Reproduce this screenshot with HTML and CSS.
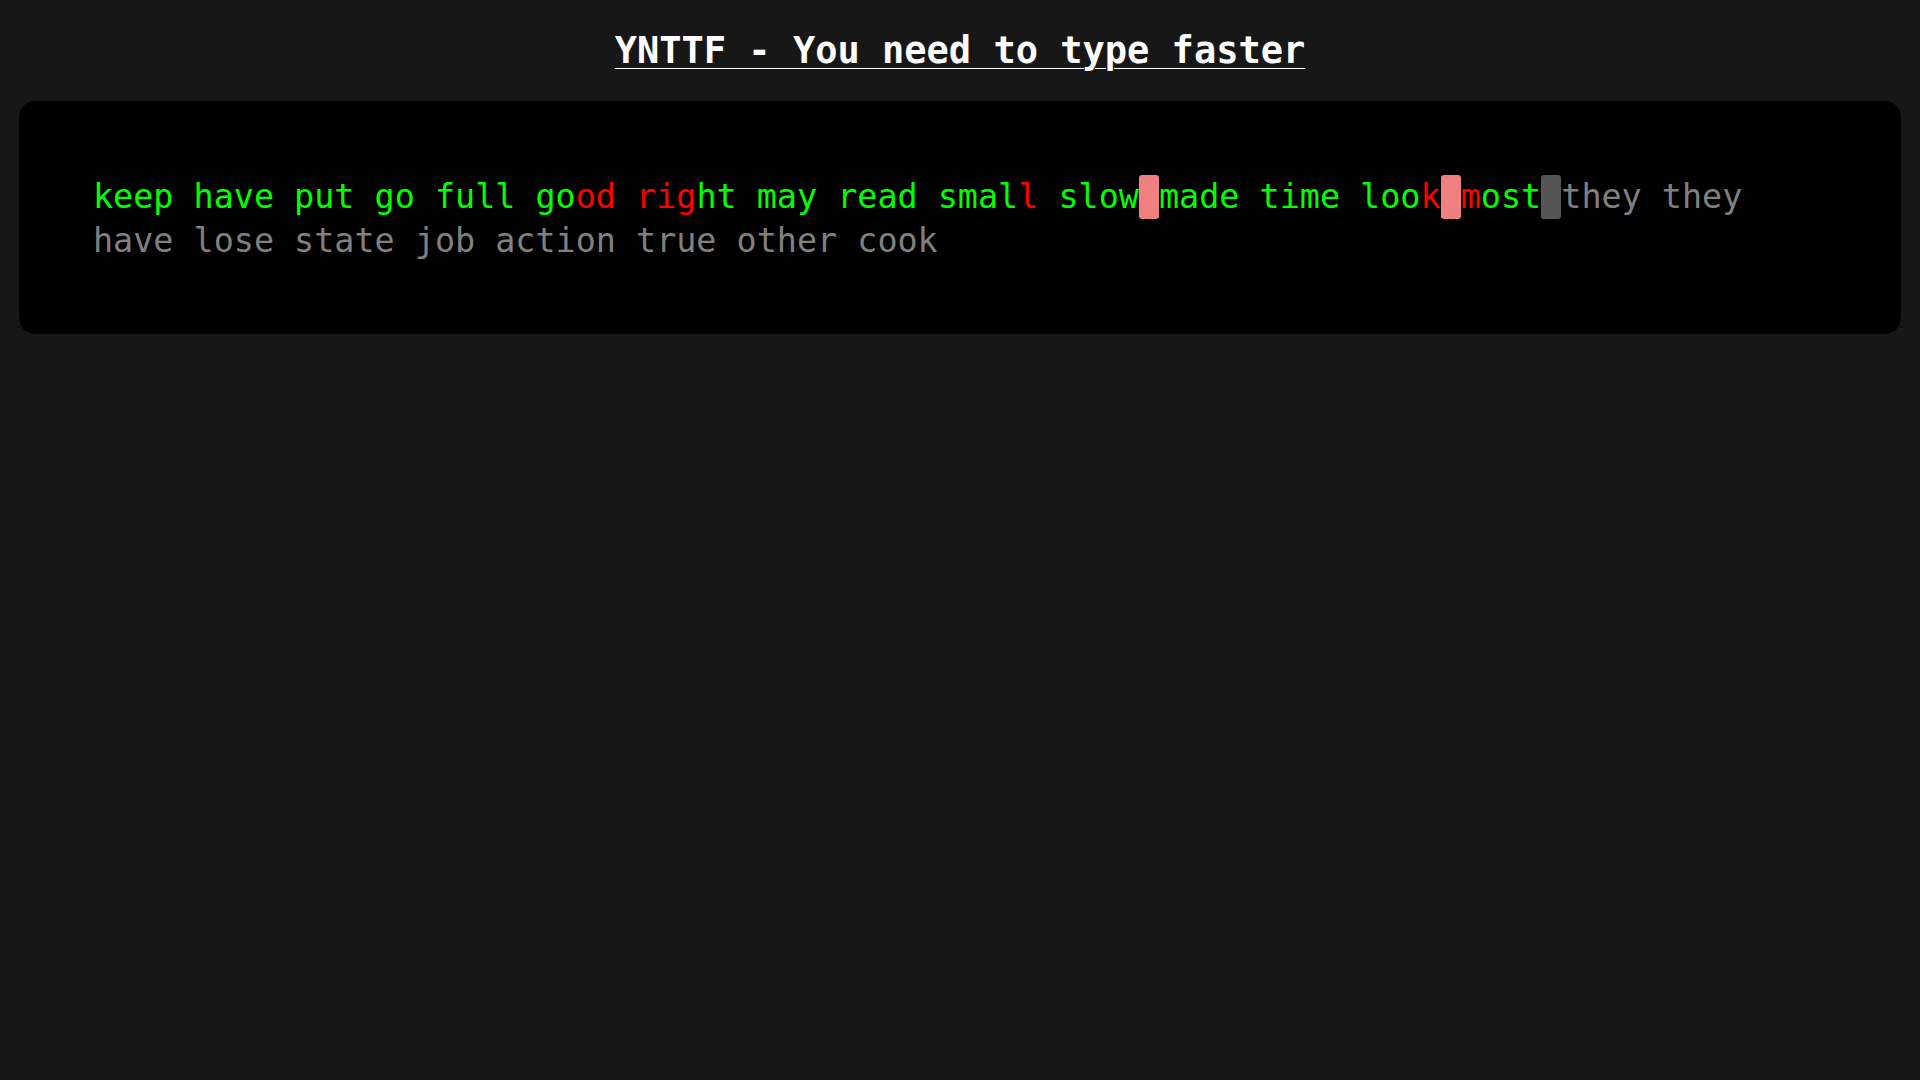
FILE: index.html
```html
<!DOCTYPE html>
<html lang="en">
<head>
<meta charset="utf-8">
<title>YNTTF - You need to type faster</title>
<link rel="stylesheet" href="styles.css">
</head>
<body>
<header class="header">
  <h1 class="title">YNTTF - You need to type faster</h1>
</header>
<main class="board">
  <p class="words"><span class="ok">keep have put go full go</span><span class="bad">od</span><span class="ok"> </span><span class="bad">rig</span><span class="ok">ht may read smal</span><span class="bad">l</span><span class="ok"> slow</span><span class="miss"></span><span class="ok">made time loo</span><span class="bad">k</span><span class="miss"></span><span class="bad">m</span><span class="ok">ost</span><span class="cursor"></span><span class="todo">they they have lose state job action true other cook</span></p>
</main>
</body>
</html>
```

FILE: styles.css
```css
html, body {
  margin: 0;
  padding: 0;
}

body {
  background: #171717;
  color: #ffffff;
  min-height: 1080px;
}

.header {
  display: flex;
  justify-content: center;
  padding-top: 29px;
}

.title {
  margin: 0;
  font-family: "DejaVu Sans Mono", "Liberation Mono", monospace;
  font-weight: bold;
  font-size: 37px;
  line-height: 44px;
  color: #ffffff;
  text-decoration: underline;
  text-decoration-thickness: 1px;
  text-underline-offset: 5px;
}

.board {
  margin: 28px 19px 0 19px;
  background: #000000;
  border-radius: 16px;
  padding: 74px 74px 71px 74px;
}

.words {
  margin: 0;
  font-family: "DejaVu Sans Mono", "Liberation Mono", monospace;
  font-size: 33.42px;
  line-height: 43.8px;
}

.ok { color: #00ff00; }
.bad { color: #ff0000; }
.todo { color: #808080; }

.miss,
.cursor {
  display: inline-block;
  width: 1ch;
  height: 43.8px;
  vertical-align: top;
  border-radius: 3px;
}

.miss { background: #f08080; }
.cursor { background: #555555; }
```
